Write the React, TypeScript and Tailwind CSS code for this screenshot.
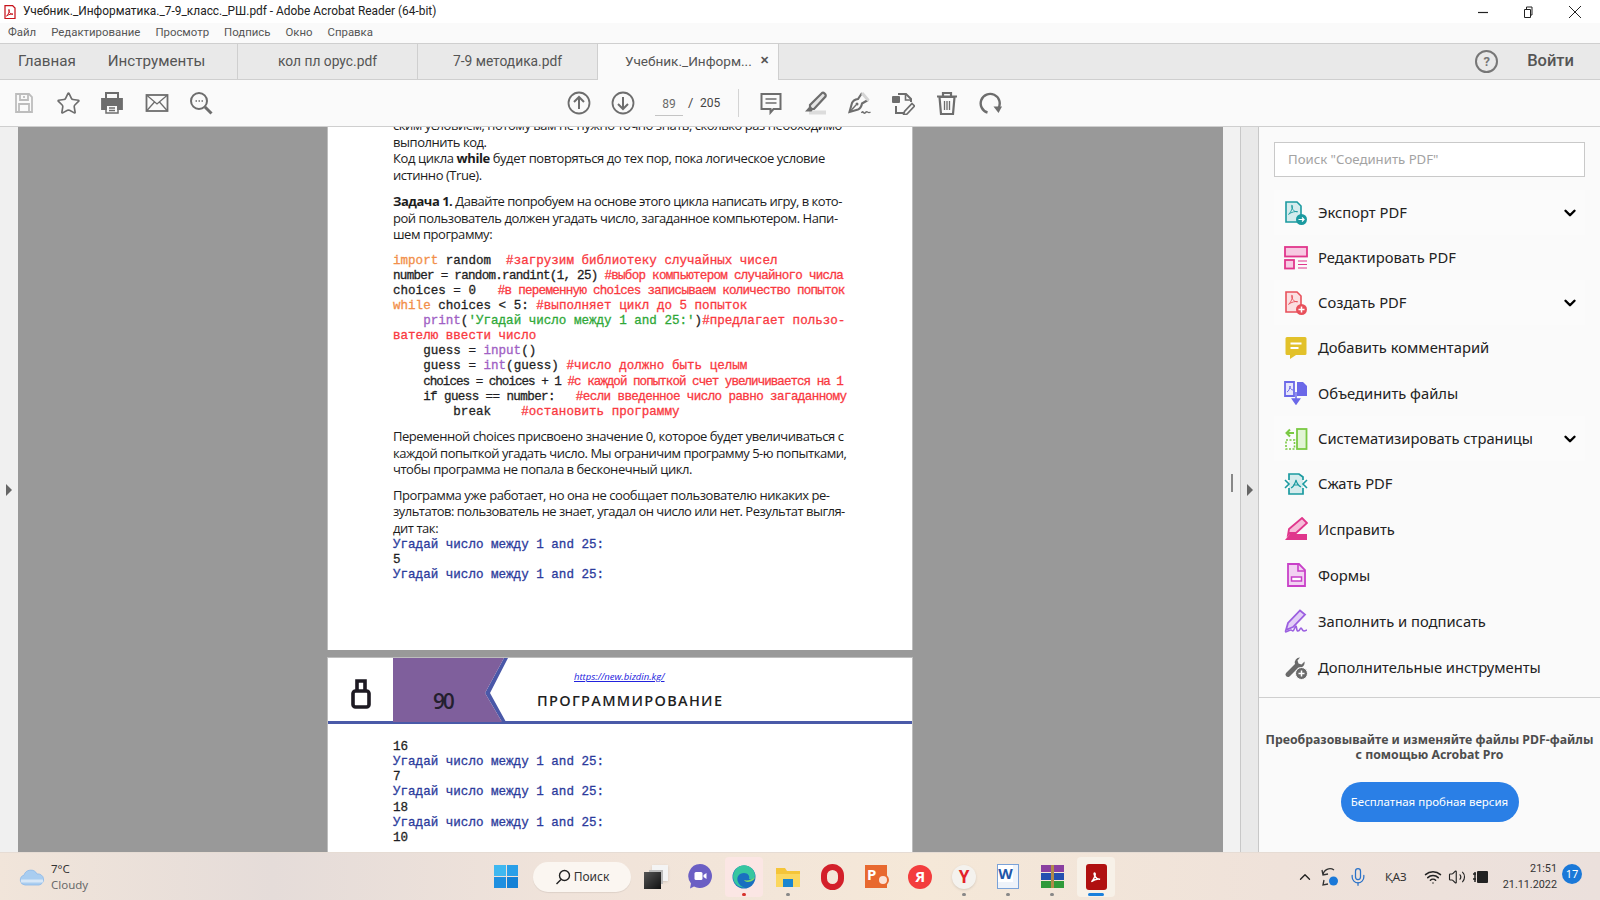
import type { ReactNode } from 'react';
import { ChevronDown, ChevronUp, Star, Wifi, Volume2, Mic } from 'lucide-react';
import { clsx } from 'clsx';

const swoosh = 'M5 19c2-1 4-5 5.5-9 .6-1.8.4-4-.6-4-1.2 0-1 2.600 1.200 6 1.600 2.500 3.500 3.500 6.900 3.300-3-.8-8.500.3-13 3.700z';

/* ---------- toolbar icons ---------- */
function ToolIcon({ children, className }: { children: ReactNode; className?: string }) {
  return (
    <svg viewBox="0 0 24 24" width="24" height="24" fill="none" stroke="currentColor" strokeWidth="1.8" className={className}>
      {children}
    </svg>
  );
}

function ToolSlot({ children, wide }: { children: ReactNode; wide?: boolean }) {
  return (
    <div className={clsx('flex items-center justify-center text-[#6d6d6d]', wide ? 'w-[44.200px]' : 'w-[44px]')}>
      {children}
    </div>
  );
}

function Toolbar() {
  return (
    <div className="flex h-[47px] shrink-0 items-center border-b border-[#cfcfcf] bg-[#fafafa] pl-[2px]">
      <ToolSlot wide>
        <ToolIcon className="text-[#bdbdbd]">
          <path d="M4 3h13l3 3v15H4z" />
          <path d="M8 3v6h8V3M7 21v-8h10v8M12 5v2" />
        </ToolIcon>
      </ToolSlot>
      <ToolSlot wide>
        <Star size={25} strokeWidth={1.6} />
      </ToolSlot>
      <ToolSlot wide>
        <ToolIcon>
          <path d="M6 8V2h12v6" strokeWidth="2" />
          <path d="M2 8h20v10h-4v-4H6v4H2z" fill="currentColor" />
          <path d="M6 14h12v8H6zM9 17h6M9 19.500h6" strokeWidth="1.500" />
        </ToolIcon>
      </ToolSlot>
      <ToolSlot wide>
        <ToolIcon>
          <rect x="1.500" y="4" width="21" height="16" />
          <path d="M1.500 4 12 13 22.500 4M1.500 20l8-9M22.500 20l-8-9" strokeWidth="1.300" />
        </ToolIcon>
      </ToolSlot>
      <ToolSlot wide>
        <ToolIcon>
          <circle cx="10" cy="10" r="8" strokeWidth="2" />
          <path d="m16 16 6.500 6.500" strokeWidth="3" />
          <path d="M6.500 10h1.500M9.500 10H11M12.500 10H14" strokeWidth="1.400" />
        </ToolIcon>
      </ToolSlot>

      <div className="w-[334px]" />
      <ToolSlot>
        <ToolIcon>
          <circle cx="12" cy="12" r="10.500" />
          <path d="M12 18V6.500M7 11l5-5 5 5" strokeWidth="2" />
        </ToolIcon>
      </ToolSlot>
      <ToolSlot>
        <ToolIcon>
          <circle cx="12" cy="12" r="10.500" />
          <path d="M12 6v11.500M7 13l5 5 5-5" strokeWidth="2" />
        </ToolIcon>
      </ToolSlot>
      <div className="ml-[10px] flex h-[26px] w-[28px] items-center justify-center border-b border-[#c4c4c4] pt-[2px] text-[12px] text-[#6b6b6b] font-['Roboto',sans-serif]">
        89
      </div>
      <div className="ml-[5px] w-[12px] text-[13px] text-[#444] font-['Roboto',sans-serif]">/</div>
      <div className="w-[38px] text-[12px] text-[#444] font-['Roboto',sans-serif]">205</div>
      <div className="h-[28px] w-px bg-[#d4d4d4]" />
      <div className="w-[10px]" />
      <ToolSlot>
        <ToolIcon>
          <path d="M2.500 3h19v15h-7l-3 3.500V18h-9z" strokeWidth="2" />
          <path d="M6.500 8h11M6.500 12h11" strokeWidth="1.600" />
        </ToolIcon>
      </ToolSlot>
      <ToolSlot>
        <ToolIcon>
          <rect x="6" y="19.500" width="17" height="4" fill="#dcdcdc" stroke="none" />
          <path d="M19 2c1.500-1 4.500 1.500 3.500 3.500L11 18H7v-4z" strokeWidth="2.200" fill="#e4e4e4" />
          <path d="M7 15l3.500 3-2 2.500H2z" fill="currentColor" stroke="none" />
        </ToolIcon>
      </ToolSlot>
      <ToolSlot>
        <ToolIcon>
          <path d="M15 2 11 8c-3 .5-5 1.500-6 4l-2.500 9 8.500-2.500c2.500-1 3.500-3 4-6l6-3.500" strokeWidth="2.100" />
          <path d="M15 2l6.500 7.500" stroke="#d4d4d4" strokeWidth="3" />
          <path d="M3.500 20 9 14" strokeWidth="1.400" />
          <circle cx="10" cy="13" r="1.500" fill="currentColor" stroke="none" />
          <path d="M14.500 22c1.500-3 2 1 3.500 0s1-2 2.500-1 1.500 1 3 0" strokeWidth="1.500" />
        </ToolIcon>
      </ToolSlot>
      <ToolSlot>
        <ToolIcon>
          <path d="M7 3h8l5 5v3M5 15v7h8" strokeWidth="2" />
          <path d="M14.500 3v6H21" strokeWidth="1.600" />
          <rect x="1" y="5" width="8" height="7" rx="1" fill="currentColor" stroke="none" />
          <path d="M21 12.500l2.500 2.500-7.500 8-3.500 1 1-3.500z" strokeWidth="1.700" />
        </ToolIcon>
      </ToolSlot>
      <ToolSlot>
        <ToolIcon>
          <path d="M2 5.500h20M8 5V2h8v3" strokeWidth="2.200" />
          <path d="M4.500 6 6 23h12l1.500-17z" strokeWidth="2.200" />
          <path d="M9.500 10v9M12 10v9M14.500 10v9" strokeWidth="1.300" />
        </ToolIcon>
      </ToolSlot>
      <ToolSlot>
        <ToolIcon>
          <path d="M8.500 21.500A9.500 9.500 0 1 1 19.500 17" strokeWidth="2.400" />
          <path d="M14.500 15.500h8.500l-3.500 6.500z" fill="currentColor" stroke="none" />
        </ToolIcon>
      </ToolSlot>
    </div>
  );
}

/* ---------- document text ---------- */
function Para({ children, className }: { children: ReactNode; className?: string }) {
  return <div className={clsx('flex flex-col leading-[16.500px]', className)}>{children}</div>;
}

function T({ children, t }: { children: ReactNode; t?: string }) {
  return <div className={clsx('h-[16.500px] whitespace-nowrap', t ?? 'tracking-[-0.450px]')}>{children}</div>;
}

const Cm = ({ children, className }: { children: ReactNode; className?: string }) => (
  <span className={clsx('text-[#f9393f]', className)}>{children}</span>
);
const Kw = ({ children }: { children: ReactNode }) => <span className="text-[#f28f4a]">{children}</span>;
const Fn = ({ children }: { children: ReactNode }) => <span className="text-[#a060c4]">{children}</span>;
const Gr = ({ children }: { children: ReactNode }) => <span className="text-[#2fa838]">{children}</span>;

function Code({ children, className }: { children: ReactNode; className?: string }) {
  return <div className={clsx('h-[15.150px] whitespace-pre', className)}>{children}</div>;
}

const codeFont = "font-['Liberation_Mono',monospace] text-[12.570px] leading-[15.150px] text-[#1f1f24] [-webkit-text-stroke:0.3px]";

function Out({ children }: { children: ReactNode }) {
  return <div className="h-[15.150px] whitespace-pre text-[#2c3b9c]">{children}</div>;
}

function PageOne() {
  return (
    <div className="h-[523px] shrink-0 overflow-hidden border-x border-[#bdbdbd] bg-white pl-[65px] text-[13px] text-[#1c1c1c] font-['Open_Sans',sans-serif]">
      <Para className="-mt-[10px]">
        <T t="tracking-[-0.470px]">ским условием, потому вам не нужно точно знать, сколько раз необходимо</T>
        <T>выполнить код.</T>
        <T t="tracking-[-0.420px]">
          Код цикла <b>while</b> будет повторяться до тех пор, пока логическое условие
        </T>
        <T>истинно (True).</T>
      </Para>
      <Para className="mt-[10px]">
        <T t="tracking-[-0.480px]">
          <b>Задача 1.</b> Давайте попробуем на основе этого цикла написать игру, в кото-
        </T>
        <T>рой пользователь должен угадать число, загаданное компьютером. Напи-</T>
        <T>шем программу:</T>
      </Para>
      <div className={clsx('mt-[11px]', codeFont)}>
        <Code>
          <Kw>import</Kw> random  <Cm>#загрузим библиотеку случайных чисел</Cm>
        </Code>
        <Code className="tracking-[-0.720px]">
          number = random.randint(1, 25) <Cm>#выбор компьютером случайного числа</Cm>
        </Code>
        <Code>
          choices = 0  <Cm className="tracking-[-0.740px]"> #в переменную choices записываем количество попыток</Cm>
        </Code>
        <Code>
          <Kw>while</Kw> choices {'<'} 5: <Cm>#выполняет цикл до 5 попыток</Cm>
        </Code>
        <Code>
          {'    '}
          <Fn>print</Fn>(<Gr>'Угадай число между 1 and 25:'</Gr>)<Cm>#предлагает пользо-</Cm>
        </Code>
        <Code>
          <Cm>вателю ввести число</Cm>
        </Code>
        <Code>
          {'    '}guess = <Fn>input</Fn>()
        </Code>
        <Code>
          {'    '}guess = <Fn>int</Fn>(guess) <Cm>#число должно быть целым</Cm>
        </Code>
        <Code>
          {'    '}
          <span className="tracking-[-0.980px]">
            choices = choices + 1 <Cm>#с каждой попыткой счет увеличивается на 1</Cm>
          </span>
        </Code>
        <Code>
          {'    '}
          <span className="tracking-[-0.600px]">
            if guess == number:   <Cm>#если введенное число равно загаданному</Cm>
          </span>
        </Code>
        <Code>
          {'        '}break    <Cm>#остановить программу</Cm>
        </Code>
      </div>
      <Para className="mt-[8px]">
        <T>Переменной choices присвоено значение 0, которое будет увеличиваться с</T>
        <T t="tracking-[-0.480px]">каждой попыткой угадать число. Мы ограничим программу 5-ю попытками,</T>
        <T>чтобы программа не попала в бесконечный цикл.</T>
      </Para>
      <Para className="mt-[9px]">
        <T>Программа уже работает, но она не сообщает пользователю никаких ре-</T>
        <T t="tracking-[-0.520px]">зультатов: пользователь не знает, угадал он число или нет. Результат выгля-</T>
        <T>дит так:</T>
      </Para>
      <div className={clsx('mt-[2px]', codeFont)}>
        <Out>Угадай число между 1 and 25:</Out>
        <Code>5</Code>
        <Out>Угадай число между 1 and 25:</Out>
      </div>
    </div>
  );
}

function PageTwo() {
  return (
    <div className="mt-[7px] flex-1 overflow-hidden border-x border-[#bdbdbd] bg-white">
      <div className="flex h-[64px] border-t border-[#bdbdbd]">
        <div className="flex w-[65px] items-center justify-center pt-[8px]">
          <svg width="20" height="30" viewBox="0 0 20 30" fill="none" stroke="#1d1a22" strokeWidth="3.600">
            <path d="M6 11V2h8v9" />
            <rect x="2" y="12" width="16" height="16" rx="2.500" />
          </svg>
        </div>
        <div className="relative flex w-[116px] items-end pb-[6px] pl-[40px]">
          <svg className="absolute inset-0" width="116" height="64" viewBox="0 0 116 64">
            <polygon points="111,0 115,0 97,35 113,64 109,64 92,35" fill="#4a58a8" />
            <polygon points="0,0 111,0 92,35 109,64 0,64" fill="#7f5f9c" />
          </svg>
          <span className="relative text-[21px] leading-[28px] font-semibold tracking-[-2.200px] text-[#241f2e] font-['Open_Sans',sans-serif]">
            90
          </span>
        </div>
        <div className="flex flex-col pl-[28px] pt-[12px]">
          <span className="ml-[37px] text-[9.500px] leading-[14px] italic text-[#2222dd] underline font-['Open_Sans',sans-serif]">
            https://new.bizdin.kg/
          </span>
          <span className="mt-[7px] text-[14.500px] leading-[20px] font-semibold tracking-[1.300px] text-[#1f1f1f] font-['Open_Sans',sans-serif]">
            ПРОГРАММИРОВАНИЕ
          </span>
        </div>
      </div>
      <div className="h-[3px] bg-[#4a5aa8]" />
      <div className={clsx('ml-[65px] mt-[16px]', codeFont)}>
        <Code>16</Code>
        <Out>Угадай число между 1 and 25:</Out>
        <Code>7</Code>
        <Out>Угадай число между 1 and 25:</Out>
        <Code>18</Code>
        <Out>Угадай число между 1 and 25:</Out>
        <Code>10</Code>
        <Code>...</Code>
      </div>
    </div>
  );
}

/* ---------- tools panel ---------- */
const panelIcons: Record<string, ReactNode> = {
  export: (
    <>
      <path d="M2 1h11l4 4v16H2z" fill="#d5eced" stroke="#1b9aa0" strokeWidth="1.600" />
      <path d={swoosh} transform="translate(1 0) scale(.7)" fill="none" stroke="#1b9aa0" strokeWidth="1.300" />
      <circle cx="17.500" cy="18.500" r="5.500" fill="#1b9aa0" />
      <path d="M14.500 18.500h5.500M18 16.500l2 2-2 2" stroke="#fff" strokeWidth="1.200" fill="none" />
    </>
  ),
  edit: (
    <>
      <rect x="1" y="1" width="22" height="9.500" fill="#f7c9e2" stroke="#e0368c" strokeWidth="1.800" />
      <rect x="1" y="14" width="9" height="8.500" fill="#f7c9e2" stroke="#e0368c" strokeWidth="1.800" />
      <path d="M14 15h9M14 18.500h9M14 22h9" stroke="#e0368c" strokeWidth="1.100" />
    </>
  ),
  create: (
    <>
      <path d="M2 1h11l4 4v16H2z" fill="#fbdfe1" stroke="#e8505b" strokeWidth="1.600" />
      <path d={swoosh} transform="translate(1 0) scale(.7)" fill="none" stroke="#e8505b" strokeWidth="1.300" />
      <circle cx="17.500" cy="18.500" r="5.500" fill="#e8505b" />
      <path d="M14.500 18.500h6M17.500 15.500v6" stroke="#fff" strokeWidth="1.500" />
    </>
  ),
  comment: (
    <>
      <path d="M3 1h18a1.500 1.500 0 0 1 1.500 1.500v15a1.500 1.500 0 0 1-1.500 1.500H12l-6 4v-4H3a1.500 1.500 0 0 1-1.500-1.500v-15A1.500 1.500 0 0 1 3 1z" fill="#e2c12a" />
      <path d="M6.500 7.500h11M6.500 12h8" stroke="#fff" strokeWidth="1.800" />
    </>
  ),
  combine: (
    <>
      <path d="M1 1h9v14H1z" fill="#e7e6fb" stroke="#6b68e8" strokeWidth="1.800" />
      <path d="M13 1h6l4 4v10H13z" fill="#6b68e8" />
      <path d="M3 11c2-1 3-4 3-6 0 2 1 4 3 4" fill="none" stroke="#6b68e8" strokeWidth="1" />
      <path d="M12 11v8M8.500 18h7L12 23z" fill="#6b68e8" stroke="#6b68e8" strokeWidth="1.500" />
    </>
  ),
  organize: (
    <>
      <rect x="13" y="2" width="9.500" height="20" fill="#e2f4d5" stroke="#7ac943" strokeWidth="1.800" />
      <rect x="2" y="13" width="8.500" height="9" fill="none" stroke="#7ac943" strokeWidth="1.600" strokeDasharray="2 1.500" />
      <path d="M10 6H4M6 2.500 2.500 6 6 9.500" fill="none" stroke="#7ac943" strokeWidth="2" />
    </>
  ),
  compress: (
    <>
      <path d="M5 8V2h10l4 3v3M5 16v6h14v-6" fill="#d5eced" stroke="#1b9aa0" strokeWidth="1.700" />
      <rect x="5" y="8" width="14" height="8" fill="#d5eced" />
      <path d="M1 8l4 4-4 4M23 8l-4 4 4 4" fill="none" stroke="#1b9aa0" strokeWidth="1.600" />
      <path d="M7 16c2-1 4-4 5-8 1 4 3 6 5 7M9 13h6" fill="none" stroke="#1b9aa0" strokeWidth="1.100" />
    </>
  ),
  redact: (
    <>
      <path d="M18 1l5 5L12 16H6l-2 2 1-6z" fill="#f6bcd9" stroke="#e0368c" strokeWidth="1.800" />
      <path d="M1 23l5-6h17v6z" fill="#e0368c" />
    </>
  ),
  forms: (
    <>
      <path d="M4 1h11l6 6v16H4z" fill="#f2d2f2" stroke="#c840c8" strokeWidth="1.800" />
      <path d="M14 1v7h7" fill="none" stroke="#c840c8" strokeWidth="1.600" />
      <rect x="7.500" y="14" width="10" height="4" fill="#fff" stroke="#c840c8" strokeWidth="1.500" />
    </>
  ),
  sign: (
    <>
      <path d="M16 1.500l5 4L9 18l-7 3 2-7z" fill="#e3cff7" stroke="#9b5fe0" strokeWidth="1.800" />
      <path d="M1 23c3-1 5-2 6-2s1 1 2 1 2-5 3-5 0 5 2 5 2-3 3-3 1 3 3 3 2-1 3-1" fill="none" stroke="#9b5fe0" strokeWidth="1.600" />
    </>
  ),
  more: (
    <>
      <path d="M16 1.500a5 5 0 0 0-5 6.500l-9 9a2.500 2.500 0 0 0 3.500 3.500l9-9a5 5 0 0 0 6-6l-3 3-3-1-1-3z" fill="#6a6a6a" />
      <circle cx="17.500" cy="17.500" r="6" fill="#6a6a6a" stroke="#fafafa" strokeWidth="1" />
      <path d="M14.500 17.500h6M17.500 14.500v6" stroke="#fff" strokeWidth="1.500" />
    </>
  ),
};

const tools = [
  { icon: 'export', label: 'Экспорт PDF', expand: true, h: 'h-[45px]' },
  { icon: 'edit', label: 'Редактировать PDF', h: 'h-[45px]' },
  { icon: 'create', label: 'Создать PDF', expand: true, h: 'h-[45px]' },
  { icon: 'comment', label: 'Добавить комментарий', h: 'h-[45px]' },
  { icon: 'combine', label: 'Объединить файлы', h: 'h-[46px]' },
  { icon: 'organize', label: 'Систематизировать страницы', expand: true, h: 'h-[45px]' },
  { icon: 'compress', label: 'Сжать PDF', h: 'h-[45px]' },
  { icon: 'redact', label: 'Исправить', h: 'h-[46px]' },
  { icon: 'forms', label: 'Формы', h: 'h-[46px]' },
  { icon: 'sign', label: 'Заполнить и подписать', h: 'h-[46px]' },
  { icon: 'more', label: 'Дополнительные инструменты', h: 'h-[47px]' },
];

function ToolsPanel() {
  return (
    <div className="flex w-[342px] flex-col border-l border-[#c8c8c8] bg-[#fafafa] font-['Noto_Sans',sans-serif]">
      <div className="mx-[15px] mt-[15px] flex h-[35px] w-[311px] items-center border border-[#c9c9c9] bg-white pl-[13px] text-[13.200px] text-[#a3a3a3]">
        Поиск "Соединить PDF"
      </div>
      <div className="mt-[13px] flex h-[507px] flex-col">
        {tools.map((tool) => (
          <div
            key={tool.label}
            className={clsx(
              'mx-[15px] flex shrink-0 items-center pl-[10px] pr-[6px] text-[14.750px] text-[#222]',
              tool.h,
              tool.expand && 'bg-[#fbfbfb]'
            )}
          >
            <svg viewBox="0 0 24 24" width="24" height="24" className="mr-[10px] shrink-0">
              {panelIcons[tool.icon]}
            </svg>
            <span className="flex-1 whitespace-nowrap">{tool.label}</span>
            {tool.expand && <ChevronDown size={18} strokeWidth={3.200} className="text-black" />}
          </div>
        ))}
      </div>
      <div className="flex flex-1 flex-col items-center border-t border-[#cfcfcf] pt-[34px]">
        <div className="whitespace-nowrap text-center text-[12.300px] leading-[15px] font-bold text-[#4d4d4d]">
          Преобразовывайте и изменяйте файлы PDF-файлы
          <br />с помощью Acrobat Pro
        </div>
        <button className="mt-[20px] h-[40px] w-[178px] rounded-full bg-[#2a7fe6] text-[11.500px] text-white">
          Бесплатная пробная версия
        </button>
      </div>
    </div>
  );
}

/* ---------- taskbar ---------- */
function TaskIcon({ children, dot, active }: { children: ReactNode; dot?: string; active?: string }) {
  return (
    <div className="relative flex h-[48px] w-[44px] items-center justify-center">
      {active && <div className={clsx('absolute left-[3px] top-[4px] h-[40px] w-[38px] rounded-[4px]', active)} />}
      <div className="relative flex">{children}</div>
      {dot && <div className={clsx('absolute bottom-[5px] left-1/2 h-[3px] -translate-x-1/2 rounded-full', dot)} />}
    </div>
  );
}

function Taskbar() {
  return (
    <div className="flex h-[48px] shrink-0 items-center border-t border-[#e6dcd4] bg-[linear-gradient(90deg,#f1e5da_0%,#e5dcd9_17%,#f0e3da_35%,#f5e8d8_58%,#efe2da_80%,#ebe0dc_100%)] text-[#333] font-['Noto_Sans',sans-serif]">
      <svg width="26" height="18" viewBox="0 0 26 18" className="ml-[19px] shrink-0">
        <path d="M6 17a5 5 0 0 1-1-9.800A7 7 0 0 1 18 6a5.500 5.500 0 0 1 2 11z" fill="#a9cdf0" stroke="#8ab8e8" strokeWidth=".8" />
        <path d="M2 13h22" stroke="#d7e7f7" strokeWidth="3" />
      </svg>
      <div className="ml-[6px] flex w-[80px] flex-col text-[11.500px] leading-[16px]">
        <span className="text-[#333]">7°C</span>
        <span className="text-[#6a6a6a]">Cloudy</span>
      </div>
      <div className="ml-[363px] grid h-[23px] w-[24px] shrink-0 grid-cols-2 gap-px">
        <div className="bg-[#3fb8f0]" />
        <div className="bg-[#2a9fe8]" />
        <div className="bg-[#1e8fe0]" />
        <div className="bg-[#1481d6]" />
      </div>
      <div className="ml-[15px] flex h-[30px] w-[98px] shrink-0 items-center justify-center gap-[3px] rounded-full bg-[#fbf6f1] text-[12px] text-[#333] shadow-[0_1px_1px_rgba(0,0,0,0.08)]">
        <svg width="16" height="16" viewBox="0 0 16 16" fill="none" stroke="#222" strokeWidth="1.400">
          <circle cx="9.500" cy="6.500" r="5" />
          <path d="M6 10.500 1.500 15" />
        </svg>
        Поиск
      </div>
      <div className="ml-[3px] flex">
        <TaskIcon>
          <div className="relative h-[24px] w-[24px]">
            <div className="absolute right-0 top-0 h-[16px] w-[16px] bg-[#f4f4f4] shadow-sm" />
            <div className="absolute right-[5px] top-[5px] h-[14px] w-[14px] bg-[#bbb]" />
            <div className="absolute bottom-0 left-0 h-[17px] w-[17px] bg-[linear-gradient(135deg,#555,#111)]" />
          </div>
        </TaskIcon>
        <TaskIcon>
          <svg width="24" height="25" viewBox="0 0 24 25">
            <path d="M12 0a12 12 0 1 1-6 22.400L2 24.500l1-5A12 12 0 0 1 12 0z" fill="#6b5fc4" />
            <rect x="6.500" y="8" width="8" height="8" rx="1.500" fill="#fff" />
            <path d="M15.500 11l3-2v6l-3-2z" fill="#fff" />
          </svg>
        </TaskIcon>
        <TaskIcon active="bg-[#fbe6e4]" dot="w-[4px] bg-[#d6322c]">
          <svg width="24" height="26" viewBox="0 0 24 26">
            <circle cx="12" cy="13" r="11.500" fill="#1a6fc0" />
            <path d="M1 12C2 4 9 0 14 1.500c5 1 9 5 9 10 0 3-3 4.500-6 3.500 1-3-1-6-5-6-5 0-8 4-6 9 1 2.500 3 5 7 5.500C7 24 1 20 1 12z" fill="#36c6a0" />
            <path d="M23 13c0 2-3 5-7 5-3 0-4-2-4-2 3 1 8 0 11-3z" fill="#7fdc6a" />
          </svg>
        </TaskIcon>
        <TaskIcon dot="w-[4px] bg-[#888]">
          <svg width="24" height="24" viewBox="0 0 24 24">
            <path d="M0 3h9l2 3h13v16H0z" fill="#f5c538" />
            <path d="M0 9h24v13H0z" fill="#fbd75e" />
            <rect x="7" y="14" width="10" height="8" fill="#1a86d0" />
          </svg>
        </TaskIcon>
        <TaskIcon>
          <div className="h-[26px] w-[23px] rounded-full border-[6px] border-[#d3202a]" />
        </TaskIcon>
        <TaskIcon>
          <div className="relative flex h-[23px] w-[22px] items-start bg-[#e8692f] pl-[2px] text-[15px] leading-[18px] font-bold text-white">
            P
            <div className="absolute bottom-[2px] right-[-2px] h-[12px] w-[12px] rounded-full border-2 border-[#e8692f] bg-[#fbe3d6]" />
          </div>
        </TaskIcon>
        <TaskIcon>
          <div className="flex h-[24px] w-[24px] items-center justify-center rounded-full bg-[#f33d3d] text-[15px] font-bold text-white">
            Я
          </div>
        </TaskIcon>
        <TaskIcon dot="w-[4px] bg-[#888]">
          <div className="flex h-[24px] w-[24px] items-center justify-center rounded-full bg-[#f4f2ee] text-[17px] leading-none font-bold text-[#e3232a] shadow">
            Y
          </div>
        </TaskIcon>
        <TaskIcon dot="w-[4px] bg-[#888]">
          <div className="relative h-[25px] w-[22px] border border-[#7aa2d8] bg-[#eef3fa]">
            <div className="absolute left-0 top-0 h-[17px] w-[15px] bg-white text-center text-[15px] leading-[17px] font-bold text-[#1f56a8]">W</div>
          </div>
        </TaskIcon>
        <TaskIcon dot="w-[4px] bg-[#888]">
          <div className="relative flex w-[23px] flex-col gap-px">
            <div className="h-[7px] bg-[#8a3fa0]" />
            <div className="h-[7px] bg-[#2450b0]" />
            <div className="h-[7px] bg-[#2f9a3a]" />
            <div className="absolute left-[10px] top-0 h-full w-[3px] bg-[#b08a4a]" />
          </div>
        </TaskIcon>
        <TaskIcon active="bg-[#f7f1e8]" dot="w-[16px] bg-[#1a80dc]">
          <div className="flex h-[26px] w-[21px] items-center justify-center rounded-[3px] bg-[#b01010]">
            <svg width="16" height="16" viewBox="0 0 24 24">
              <path d={swoosh} fill="none" stroke="#fff" strokeWidth="2.200" />
            </svg>
          </div>
        </TaskIcon>
      </div>
      <div className="ml-[178px] flex items-center">
        <ChevronUp size={18} strokeWidth={1.800} className="text-[#222]" />
        <svg width="18" height="22" viewBox="0 0 18 22" fill="none" stroke="#333" strokeWidth="1.300" className="ml-[7px]">
          <path d="M2 9a7 7 0 0 1 11-5M1 4l1 5 5-1M3 14l-1 5 5-1" />
          <circle cx="12.500" cy="15" r="4.500" fill="#1a78d8" stroke="none" />
        </svg>
        <Mic size={20} strokeWidth={1.500} className="ml-[9px] text-[#2a72c8]" />
        <span className="ml-[17px] w-[28px] text-[11.500px] text-[#333]">ҚАЗ</span>
        <Wifi size={18} strokeWidth={2} className="ml-[11px] text-[#222]" />
        <Volume2 size={18} strokeWidth={1.500} className="ml-[6px] text-[#222]" />
        <svg width="18" height="16" viewBox="0 0 18 16" className="ml-[6px]">
          <path d="M1 5h3M1 10h3M3 3v10" stroke="#222" strokeWidth="1.500" />
          <rect x="5" y="2" width="11" height="12" rx="1" fill="#222" />
        </svg>
      </div>
      <div className="ml-[1px] flex w-[66px] flex-col items-end text-[10.800px] leading-[16px] text-[#333] font-['Roboto',sans-serif]">
        <span>21:51</span>
        <span>21.11.2022</span>
      </div>
      <div className="mb-[5px] ml-[5px] flex h-[20px] w-[20px] items-center justify-center rounded-full bg-[#1a78d8] text-[11px] text-white">
        17
      </div>
    </div>
  );
}

/* ---------- main window ---------- */
const menu = ['Файл', 'Редактирование', 'Просмотр', 'Подпись', 'Окно', 'Справка'];

export default function App() {
  return (
    <div className="flex h-screen w-[1600px] flex-col overflow-hidden bg-white font-['Roboto',sans-serif]">
      {/* Title bar */}
      <div className="flex h-[23px] shrink-0 items-center bg-white pl-[4px] pt-[1px] text-[11.900px] text-[#222]">
        <svg width="12" height="14" viewBox="0 0 24 28" className="mr-[7px]">
          <path d="M2 1h15l5 5v21H2z" fill="#fff" stroke="#c8141c" strokeWidth="2.500" />
          <path d={swoosh} transform="translate(0 3)" fill="none" stroke="#c8141c" strokeWidth="2" />
        </svg>
        <span className="flex-1">Учебник._Информатика._7-9_класс._РШ.pdf - Adobe Acrobat Reader (64-bit)</span>
        <svg width="12" height="12" viewBox="0 0 12 12" className="mr-[33px]" stroke="#222">
          <path d="M1 6.500h10" strokeWidth="1.200" />
        </svg>
        <svg width="12" height="12" viewBox="0 0 12 12" fill="none" className="mr-[34px]" stroke="#222">
          <path d="M2.500 3.500h6v8h-6zM4.500 3.500V1h5.500v8H8.500" />
        </svg>
        <svg width="14" height="14" viewBox="0 0 14 14" className="mr-[18px]" stroke="#222">
          <path d="M1 1l12 12M13 1 1 13" />
        </svg>
      </div>
      {/* Menu bar */}
      <div className="flex h-[21px] shrink-0 items-center gap-[15px] border-b border-[#cfcfcf] bg-[#fafafa] pl-[8px] text-[11.400px] text-[#555]">
        {menu.map((item) => (
          <span key={item}>{item}</span>
        ))}
      </div>
      {/* Tabs */}
      <div className="flex h-[36px] shrink-0 items-center border-b border-[#cfcfcf] bg-[#e9e9e9] text-[13.800px] text-[#555]">
        <div className="flex h-full w-[238px] items-center gap-[32px] border-r border-[#cfcfcf] pl-[18px] text-[15.200px]">
          <span>Главная</span>
          <span>Инструменты</span>
        </div>
        <div className="flex h-full w-[180px] items-center justify-center border-r border-[#cfcfcf]">кол пл орус.pdf</div>
        <div className="flex h-full w-[180px] items-center justify-center border-r border-[#cfcfcf]">7-9 методика.pdf</div>
        <div className="flex h-[36px] w-[181px] items-center self-start border-r border-[#cfcfcf] bg-[#fafafa] pb-[1px] pl-[27px] text-[13.600px]">
          <span className="flex-1">Учебник._Информ...</span>
          <span className="mr-[9px] text-[11px] font-bold">✕</span>
        </div>
        <div className="flex-1" />
        <div className="mr-[29px] flex h-[23px] w-[23px] items-center justify-center rounded-full border-2 border-[#777] text-[13px] font-bold text-[#777]">
          ?
        </div>
        <span className="mr-[26px] text-[16.500px] font-medium">Войти</span>
      </div>
      <Toolbar />
      {/* Content */}
      <div className="flex min-h-0 flex-1">
        <div className="flex w-[18px] items-center justify-center bg-[#f0f0f0]">
          <div className="h-0 w-0 border-y-[6px] border-l-[6px] border-y-transparent border-l-[#666]" />
        </div>
        <div className="flex w-[1205px] flex-col overflow-hidden bg-[#999999] pl-[309px]">
          <div className="flex h-full w-[586px] flex-col">
            <PageOne />
            <PageTwo />
          </div>
        </div>
        <div className="flex w-[18px] items-center justify-center border-r border-[#c8c8c8] bg-[#f2f2f2] pb-[14px]">
          <div className="h-[18px] w-[2px] bg-[#888]" />
        </div>
        <div className="flex w-[17px] items-center justify-center bg-[#e9e9e9]">
          <div className="h-0 w-0 border-y-[6px] border-l-[6px] border-y-transparent border-l-[#666]" />
        </div>
        <ToolsPanel />
      </div>
      <Taskbar />
    </div>
  );
}
